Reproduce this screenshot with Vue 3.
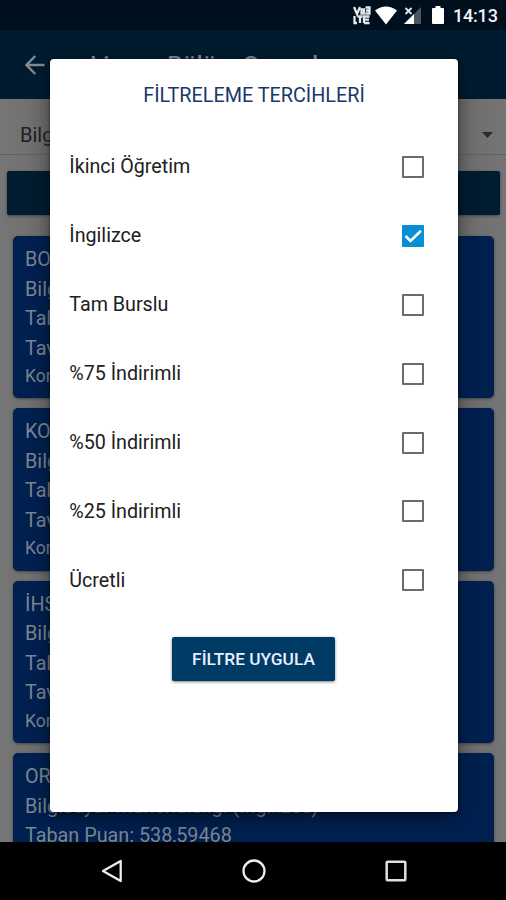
<script setup>
import { ref } from 'vue'

const options = ref([
  { label: 'İkinci Öğretim', checked: false },
  { label: 'İngilizce', checked: true },
  { label: 'Tam Burslu', checked: false },
  { label: '%75 İndirimli', checked: false },
  { label: '%50 İndirimli', checked: false },
  { label: '%25 İndirimli', checked: false },
  { label: 'Ücretli', checked: false },
])

const department = 'Bilgisayar Mühendisliği (İngilizce)'
const cards = [
  { name: 'BOĞAZİÇİ ÜNİVERSİTESİ', base: 'Taban Puan:', top: 'Tavan Puan:', quota: 'Kontenjan:' },
  { name: 'KOÇ ÜNİVERSİTESİ', base: 'Taban Puan:', top: 'Tavan Puan:', quota: 'Kontenjan:' },
  { name: 'İHSAN DOĞRAMACI BİLKENT', base: 'Taban Puan:', top: 'Tavan Puan:', quota: 'Kontenjan:' },
  { name: 'ORTA DOĞU TEKNİK', base: 'Taban Puan: 538,59468' },
]
</script>

<template>
  <div class="screen">
    <header class="status">
      <svg class="volte" width="18" height="19" viewBox="0 0 18 19">
        <path d="M1 1l3 7 3-7M8.500 3.500h2.500v4H8.500zM12.500 1.500h4v6h-4M13 4.500h3M1.500 10v7H4M4.500 10.500h5M7 10.500V17M11 17v-6.500h5.500M11 13.700h5M11 17h5.500" fill="none" stroke="#e4e7e9" stroke-width="2.300" />
      </svg>
      <svg class="wifi" width="22" height="19" viewBox="0 0 22 19">
        <path d="M0 4.500Q11-3.500 22 4.500L11 18.500z" fill="#fff" />
      </svg>
      <svg class="signal" width="18" height="19" viewBox="0 0 18 19">
        <path d="M17 1v17H0z" fill="#4b555e" />
        <path d="M10 8v10H0z" fill="#fff" />
        <path d="M1.500 2l6 6M7.500 2l-6 6" stroke="#e4e7e9" stroke-width="1.800" />
      </svg>
      <svg class="battery" width="12" height="19" viewBox="0 0 12 19">
        <path d="M3.500 0h5v2H11q1 0 1 1v14q0 1-1 1H1q-1 0-1-1V3q0-1 1-1h2.500z" fill="#fff" />
      </svg>
      <span class="clock">14:13</span>
    </header>

    <div class="toolbar">
      <svg width="20" height="20" viewBox="0 0 20 20">
        <path d="M19.500 10H2M10.300 1L1.500 10l8.800 9" fill="none" stroke="#858b91" stroke-width="2.400" />
      </svg>
      <h1>Lisans Bölüm Sonuçları</h1>
    </div>

    <main class="content">
      <div class="select">
        <span>{{ department }}</span>
        <svg width="11" height="6" viewBox="0 0 11 6"><path d="M0 0h11L5.500 6z" fill="#2b2b2b" /></svg>
      </div>
      <div class="filter-bar"></div>
      <section class="cards">
        <article v-for="card in cards" :key="card.name" class="card">
          <p>{{ card.name }}</p>
          <p>{{ department }}</p>
          <p>{{ card.base }}</p>
          <template v-if="card.top">
            <p>{{ card.top }}</p>
            <p class="quota">{{ card.quota }}</p>
          </template>
        </article>
      </section>
    </main>

    <nav class="nav">
      <svg width="22" height="24" viewBox="0 0 22 24"><path d="M19.700 2v20L2 12z" fill="none" stroke="#eee" stroke-width="2.300" stroke-linejoin="round" /></svg>
      <svg width="24" height="24" viewBox="0 0 24 24"><circle cx="12" cy="12" r="10.500" fill="none" stroke="#eee" stroke-width="2.300" /></svg>
      <svg width="22" height="22" viewBox="0 0 22 22"><rect x="1.700" y="1.700" width="18.600" height="18.600" rx=".8" fill="none" stroke="#e0e0e0" stroke-width="2.500" /></svg>
    </nav>

    <div class="dialog">
      <h2>FİLTRELEME TERCİHLERİ</h2>
      <ul>
        <li v-for="item in options" :key="item.label" @click="item.checked = !item.checked">
          <span>{{ item.label }}</span>
          <i class="box" :class="{ on: item.checked }">
            <svg v-if="item.checked" width="22" height="22" viewBox="0 0 22 22">
              <path d="M3.500 11l5 5L19 5.800" fill="none" stroke="#fff" stroke-width="2.600" />
            </svg>
          </i>
        </li>
      </ul>
      <button>FİLTRE UYGULA</button>
    </div>
  </div>
</template>

<style>
body { background: #000; }
</style>

<style scoped>
* { box-sizing: border-box; margin: 0; padding: 0; }
.screen {
  position: relative;
  display: flex;
  flex-direction: column;
  width: 506px;
  height: 900px;
  overflow: hidden;
  background: #737373;
  font-family: Roboto, "Liberation Sans", sans-serif;
}
.status {
  display: flex;
  align-items: center;
  justify-content: flex-end;
  height: 30px;
  flex: none;
  padding-right: 9px;
  background: #000f1e;
}
.wifi { margin-left: 4px; }
.signal { margin-left: 7px; }
.battery { margin-left: 10px; }
.clock { margin-left: 9px; width: 44px; color: #f2f4f5; font-size: 18px; font-weight: 500; letter-spacing: -.2px; white-space: nowrap; }
.toolbar {
  display: flex;
  align-items: center;
  flex: none;
  height: 69px;
  padding-left: 25px;
  gap: 45px;
  background: #001b30;
}
.toolbar h1 { color: #858b91; font-size: 24.400px; font-weight: 500; line-height: 28px; white-space: nowrap; }
.content { flex: 1; overflow: hidden; background: linear-gradient(90deg, #767676, #6c6c6c 50px, #6c6c6c 458px, #757575); }
.select {
  display: flex;
  align-items: center;
  justify-content: space-between;
  height: 56px;
  padding: 16px 13px 0 20px;
  border-bottom: 1px solid #606060;
  color: #202020;
  font-size: 20px;
}
.filter-bar { height: 44px; margin: 16px 6px 21px 7px; border-radius: 2px; background: #001c30; box-shadow: 0 1px 3px #444; }
.cards { display: flex; flex-direction: column; gap: 10px; padding: 0 12px 0 13px; }
.card { height: 162.400px; flex: none; padding: 9px 12px; border-radius: 5px; background: #002050; color: #7d8590; font-size: 19.800px; line-height: 29.500px; white-space: nowrap; box-shadow: 0 1px 3px #444; }
.card .quota { font-size: 17.500px; line-height: 26px; }
.nav { display: flex; align-items: center; justify-content: space-between; flex: none; height: 58px; padding: 0 99px 0 101px; background: #000; }
.dialog {
  position: absolute;
  left: 50px;
  top: 59px;
  width: 408px;
  height: 753px;
  padding-top: 22px;
  border-radius: 4px;
  background: #fff;
  box-shadow: 0 5px 20px rgba(0, 0, 0, .45), 0 1px 3px rgba(0, 0, 0, .5);
}
h2 { color: #173966; text-align: center; font-size: 19.800px; line-height: 30px; font-weight: 400; }
ul { list-style: none; padding: 21.500px 34px 0 19.300px; }
li { display: flex; align-items: center; justify-content: space-between; height: 68.900px; color: #202020; font-size: 19.700px; cursor: pointer; }
.box { display: block; width: 22px; height: 22px; border: 2px solid #6b6b6b; border-radius: 1px; }
.box.on { border: 0; background: #078fd3; }
.box svg { display: block; }
button {
  display: block;
  width: 163px;
  height: 44px;
  margin: 22.500px auto 0 122px;
  border: 0;
  border-radius: 2px;
  background: #003b65;
  box-shadow: 0 1px 3px rgba(0, 0, 0, .5);
  color: #e8f0ff;
  font: 500 17.300px Roboto, sans-serif;
  white-space: nowrap;
}
</style>
